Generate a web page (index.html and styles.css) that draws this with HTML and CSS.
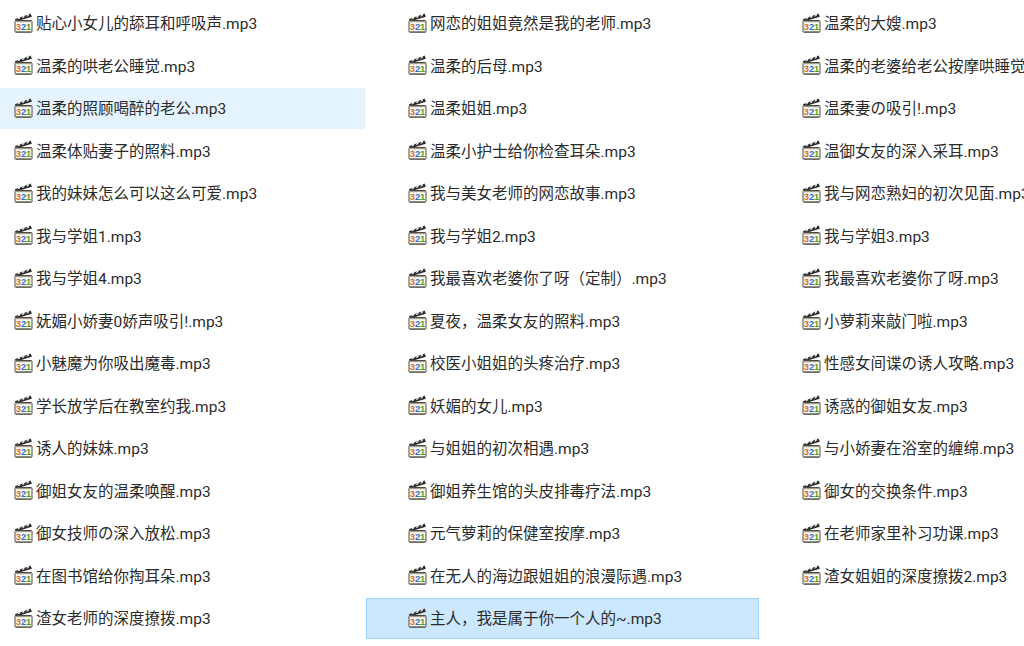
FILE: index.html
```html
<!DOCTYPE html>
<html lang="zh-CN">
<head>
<meta charset="utf-8">
<title>mp3 files</title>
<link rel="stylesheet" href="styles.css">
</head>
<body>
<svg class="defs" width="0" height="0" aria-hidden="true">
  <symbol id="mp3" viewBox="0 0 19 20">
    <path d="M.8 6.2 16.6.6l1.3 3.2L2.2 8.4z" fill="#2e2e2e"/>
    <path d="M3.6 6.4 4.8 3.9l2-.7L5.6 5.8zM8 5l1.2-2.7 2-.7L10 4.4zM12.4 3.7l1.2-2.8 2-.6-1.2 2.8z" fill="#f0f0f0"/>
    <rect x="1" y="7.5" width="17" height="11.8" rx="1" fill="#fbfaf5" stroke="#4d4a44" stroke-width="1"/>
    <path d="M1.5 8h16v1.2h-16z" fill="#a59d88"/>
    <path d="M1.5 18h16v1h-16z" fill="#8f8a7c"/>
  </symbol>
</svg>
<main class="list">
  <section class="col col-first">
    <div class="row"><svg class="ico" viewBox="0 0 19 20"><use href="#mp3"/><text class="num" x="9.5" y="17.2"><tspan class="d3">3</tspan><tspan class="d2">2</tspan><tspan class="d1">1</tspan></text></svg><span>贴心小女儿的舔耳和呼吸声.mp3</span></div>
    <div class="row"><svg class="ico" viewBox="0 0 19 20"><use href="#mp3"/><text class="num" x="9.5" y="17.2"><tspan class="d3">3</tspan><tspan class="d2">2</tspan><tspan class="d1">1</tspan></text></svg><span>温柔的哄老公睡觉.mp3</span></div>
    <div class="row hover"><svg class="ico" viewBox="0 0 19 20"><use href="#mp3"/><text class="num" x="9.5" y="17.2"><tspan class="d3">3</tspan><tspan class="d2">2</tspan><tspan class="d1">1</tspan></text></svg><span>温柔的照顾喝醉的老公.mp3</span></div>
    <div class="row"><svg class="ico" viewBox="0 0 19 20"><use href="#mp3"/><text class="num" x="9.5" y="17.2"><tspan class="d3">3</tspan><tspan class="d2">2</tspan><tspan class="d1">1</tspan></text></svg><span>温柔体贴妻子的照料.mp3</span></div>
    <div class="row"><svg class="ico" viewBox="0 0 19 20"><use href="#mp3"/><text class="num" x="9.5" y="17.2"><tspan class="d3">3</tspan><tspan class="d2">2</tspan><tspan class="d1">1</tspan></text></svg><span>我的妹妹怎么可以这么可爱.mp3</span></div>
    <div class="row"><svg class="ico" viewBox="0 0 19 20"><use href="#mp3"/><text class="num" x="9.5" y="17.2"><tspan class="d3">3</tspan><tspan class="d2">2</tspan><tspan class="d1">1</tspan></text></svg><span>我与学姐1.mp3</span></div>
    <div class="row"><svg class="ico" viewBox="0 0 19 20"><use href="#mp3"/><text class="num" x="9.5" y="17.2"><tspan class="d3">3</tspan><tspan class="d2">2</tspan><tspan class="d1">1</tspan></text></svg><span>我与学姐4.mp3</span></div>
    <div class="row"><svg class="ico" viewBox="0 0 19 20"><use href="#mp3"/><text class="num" x="9.5" y="17.2"><tspan class="d3">3</tspan><tspan class="d2">2</tspan><tspan class="d1">1</tspan></text></svg><span>妩媚小娇妻0娇声吸引!.mp3</span></div>
    <div class="row"><svg class="ico" viewBox="0 0 19 20"><use href="#mp3"/><text class="num" x="9.5" y="17.2"><tspan class="d3">3</tspan><tspan class="d2">2</tspan><tspan class="d1">1</tspan></text></svg><span>小魅魔为你吸出魔毒.mp3</span></div>
    <div class="row"><svg class="ico" viewBox="0 0 19 20"><use href="#mp3"/><text class="num" x="9.5" y="17.2"><tspan class="d3">3</tspan><tspan class="d2">2</tspan><tspan class="d1">1</tspan></text></svg><span>学长放学后在教室约我.mp3</span></div>
    <div class="row"><svg class="ico" viewBox="0 0 19 20"><use href="#mp3"/><text class="num" x="9.5" y="17.2"><tspan class="d3">3</tspan><tspan class="d2">2</tspan><tspan class="d1">1</tspan></text></svg><span>诱人的妹妹.mp3</span></div>
    <div class="row"><svg class="ico" viewBox="0 0 19 20"><use href="#mp3"/><text class="num" x="9.5" y="17.2"><tspan class="d3">3</tspan><tspan class="d2">2</tspan><tspan class="d1">1</tspan></text></svg><span>御姐女友的温柔唤醒.mp3</span></div>
    <div class="row"><svg class="ico" viewBox="0 0 19 20"><use href="#mp3"/><text class="num" x="9.5" y="17.2"><tspan class="d3">3</tspan><tspan class="d2">2</tspan><tspan class="d1">1</tspan></text></svg><span>御女技师の深入放松.mp3</span></div>
    <div class="row"><svg class="ico" viewBox="0 0 19 20"><use href="#mp3"/><text class="num" x="9.5" y="17.2"><tspan class="d3">3</tspan><tspan class="d2">2</tspan><tspan class="d1">1</tspan></text></svg><span>在图书馆给你掏耳朵.mp3</span></div>
    <div class="row"><svg class="ico" viewBox="0 0 19 20"><use href="#mp3"/><text class="num" x="9.5" y="17.2"><tspan class="d3">3</tspan><tspan class="d2">2</tspan><tspan class="d1">1</tspan></text></svg><span>渣女老师的深度撩拨.mp3</span></div>
  </section>
  <section class="col">
    <div class="row"><svg class="ico" viewBox="0 0 19 20"><use href="#mp3"/><text class="num" x="9.5" y="17.2"><tspan class="d3">3</tspan><tspan class="d2">2</tspan><tspan class="d1">1</tspan></text></svg><span>网恋的姐姐竟然是我的老师.mp3</span></div>
    <div class="row"><svg class="ico" viewBox="0 0 19 20"><use href="#mp3"/><text class="num" x="9.5" y="17.2"><tspan class="d3">3</tspan><tspan class="d2">2</tspan><tspan class="d1">1</tspan></text></svg><span>温柔的后母.mp3</span></div>
    <div class="row"><svg class="ico" viewBox="0 0 19 20"><use href="#mp3"/><text class="num" x="9.5" y="17.2"><tspan class="d3">3</tspan><tspan class="d2">2</tspan><tspan class="d1">1</tspan></text></svg><span>温柔姐姐.mp3</span></div>
    <div class="row"><svg class="ico" viewBox="0 0 19 20"><use href="#mp3"/><text class="num" x="9.5" y="17.2"><tspan class="d3">3</tspan><tspan class="d2">2</tspan><tspan class="d1">1</tspan></text></svg><span>温柔小护士给你检查耳朵.mp3</span></div>
    <div class="row"><svg class="ico" viewBox="0 0 19 20"><use href="#mp3"/><text class="num" x="9.5" y="17.2"><tspan class="d3">3</tspan><tspan class="d2">2</tspan><tspan class="d1">1</tspan></text></svg><span>我与美女老师的网恋故事.mp3</span></div>
    <div class="row"><svg class="ico" viewBox="0 0 19 20"><use href="#mp3"/><text class="num" x="9.5" y="17.2"><tspan class="d3">3</tspan><tspan class="d2">2</tspan><tspan class="d1">1</tspan></text></svg><span>我与学姐2.mp3</span></div>
    <div class="row"><svg class="ico" viewBox="0 0 19 20"><use href="#mp3"/><text class="num" x="9.5" y="17.2"><tspan class="d3">3</tspan><tspan class="d2">2</tspan><tspan class="d1">1</tspan></text></svg><span>我最喜欢老婆你了呀（定制）.mp3</span></div>
    <div class="row"><svg class="ico" viewBox="0 0 19 20"><use href="#mp3"/><text class="num" x="9.5" y="17.2"><tspan class="d3">3</tspan><tspan class="d2">2</tspan><tspan class="d1">1</tspan></text></svg><span>夏夜，温柔女友的照料.mp3</span></div>
    <div class="row"><svg class="ico" viewBox="0 0 19 20"><use href="#mp3"/><text class="num" x="9.5" y="17.2"><tspan class="d3">3</tspan><tspan class="d2">2</tspan><tspan class="d1">1</tspan></text></svg><span>校医小姐姐的头疼治疗.mp3</span></div>
    <div class="row"><svg class="ico" viewBox="0 0 19 20"><use href="#mp3"/><text class="num" x="9.5" y="17.2"><tspan class="d3">3</tspan><tspan class="d2">2</tspan><tspan class="d1">1</tspan></text></svg><span>妖媚的女儿.mp3</span></div>
    <div class="row"><svg class="ico" viewBox="0 0 19 20"><use href="#mp3"/><text class="num" x="9.5" y="17.2"><tspan class="d3">3</tspan><tspan class="d2">2</tspan><tspan class="d1">1</tspan></text></svg><span>与姐姐的初次相遇.mp3</span></div>
    <div class="row"><svg class="ico" viewBox="0 0 19 20"><use href="#mp3"/><text class="num" x="9.5" y="17.2"><tspan class="d3">3</tspan><tspan class="d2">2</tspan><tspan class="d1">1</tspan></text></svg><span>御姐养生馆的头皮排毒疗法.mp3</span></div>
    <div class="row"><svg class="ico" viewBox="0 0 19 20"><use href="#mp3"/><text class="num" x="9.5" y="17.2"><tspan class="d3">3</tspan><tspan class="d2">2</tspan><tspan class="d1">1</tspan></text></svg><span>元气萝莉的保健室按摩.mp3</span></div>
    <div class="row"><svg class="ico" viewBox="0 0 19 20"><use href="#mp3"/><text class="num" x="9.5" y="17.2"><tspan class="d3">3</tspan><tspan class="d2">2</tspan><tspan class="d1">1</tspan></text></svg><span>在无人的海边跟姐姐的浪漫际遇.mp3</span></div>
    <div class="row selected"><svg class="ico" viewBox="0 0 19 20"><use href="#mp3"/><text class="num" x="9.5" y="17.2"><tspan class="d3">3</tspan><tspan class="d2">2</tspan><tspan class="d1">1</tspan></text></svg><span>主人，我是属于你一个人的~.mp3</span></div>
  </section>
  <section class="col">
    <div class="row"><svg class="ico" viewBox="0 0 19 20"><use href="#mp3"/><text class="num" x="9.5" y="17.2"><tspan class="d3">3</tspan><tspan class="d2">2</tspan><tspan class="d1">1</tspan></text></svg><span>温柔的大嫂.mp3</span></div>
    <div class="row"><svg class="ico" viewBox="0 0 19 20"><use href="#mp3"/><text class="num" x="9.5" y="17.2"><tspan class="d3">3</tspan><tspan class="d2">2</tspan><tspan class="d1">1</tspan></text></svg><span>温柔的老婆给老公按摩哄睡觉</span></div>
    <div class="row"><svg class="ico" viewBox="0 0 19 20"><use href="#mp3"/><text class="num" x="9.5" y="17.2"><tspan class="d3">3</tspan><tspan class="d2">2</tspan><tspan class="d1">1</tspan></text></svg><span>温柔妻の吸引!.mp3</span></div>
    <div class="row"><svg class="ico" viewBox="0 0 19 20"><use href="#mp3"/><text class="num" x="9.5" y="17.2"><tspan class="d3">3</tspan><tspan class="d2">2</tspan><tspan class="d1">1</tspan></text></svg><span>温御女友的深入采耳.mp3</span></div>
    <div class="row"><svg class="ico" viewBox="0 0 19 20"><use href="#mp3"/><text class="num" x="9.5" y="17.2"><tspan class="d3">3</tspan><tspan class="d2">2</tspan><tspan class="d1">1</tspan></text></svg><span>我与网恋熟妇的初次见面.mp3</span></div>
    <div class="row"><svg class="ico" viewBox="0 0 19 20"><use href="#mp3"/><text class="num" x="9.5" y="17.2"><tspan class="d3">3</tspan><tspan class="d2">2</tspan><tspan class="d1">1</tspan></text></svg><span>我与学姐3.mp3</span></div>
    <div class="row"><svg class="ico" viewBox="0 0 19 20"><use href="#mp3"/><text class="num" x="9.5" y="17.2"><tspan class="d3">3</tspan><tspan class="d2">2</tspan><tspan class="d1">1</tspan></text></svg><span>我最喜欢老婆你了呀.mp3</span></div>
    <div class="row"><svg class="ico" viewBox="0 0 19 20"><use href="#mp3"/><text class="num" x="9.5" y="17.2"><tspan class="d3">3</tspan><tspan class="d2">2</tspan><tspan class="d1">1</tspan></text></svg><span>小萝莉来敲门啦.mp3</span></div>
    <div class="row"><svg class="ico" viewBox="0 0 19 20"><use href="#mp3"/><text class="num" x="9.5" y="17.2"><tspan class="d3">3</tspan><tspan class="d2">2</tspan><tspan class="d1">1</tspan></text></svg><span>性感女间谍の诱人攻略.mp3</span></div>
    <div class="row"><svg class="ico" viewBox="0 0 19 20"><use href="#mp3"/><text class="num" x="9.5" y="17.2"><tspan class="d3">3</tspan><tspan class="d2">2</tspan><tspan class="d1">1</tspan></text></svg><span>诱惑的御姐女友.mp3</span></div>
    <div class="row"><svg class="ico" viewBox="0 0 19 20"><use href="#mp3"/><text class="num" x="9.5" y="17.2"><tspan class="d3">3</tspan><tspan class="d2">2</tspan><tspan class="d1">1</tspan></text></svg><span>与小娇妻在浴室的缠绵.mp3</span></div>
    <div class="row"><svg class="ico" viewBox="0 0 19 20"><use href="#mp3"/><text class="num" x="9.5" y="17.2"><tspan class="d3">3</tspan><tspan class="d2">2</tspan><tspan class="d1">1</tspan></text></svg><span>御女的交换条件.mp3</span></div>
    <div class="row"><svg class="ico" viewBox="0 0 19 20"><use href="#mp3"/><text class="num" x="9.5" y="17.2"><tspan class="d3">3</tspan><tspan class="d2">2</tspan><tspan class="d1">1</tspan></text></svg><span>在老师家里补习功课.mp3</span></div>
    <div class="row"><svg class="ico" viewBox="0 0 19 20"><use href="#mp3"/><text class="num" x="9.5" y="17.2"><tspan class="d3">3</tspan><tspan class="d2">2</tspan><tspan class="d1">1</tspan></text></svg><span>渣女姐姐的深度撩拨2.mp3</span></div>
  </section>
</main>
</body>
</html>
```
FILE: styles.css
```css
html, body {
  margin: 0;
  padding: 0;
  width: 1024px;
  height: 646px;
  overflow: hidden;
  background: #fff;
}
.defs { display: block; height: 0; }
.list {
  display: grid;
  grid-template-columns: 366px 394px 264px;
  padding-top: 3px;
  font: 15.5px/20px Roboto, "Noto Sans CJK SC", sans-serif;
  color: #2b2b2b;
}
.col { display: flex; flex-direction: column; gap: 2px; min-width: 0; overflow: hidden; }
.row {
  box-sizing: border-box;
  height: 40.5px;
  margin-right: 1px;
  padding-left: 42px;
  display: flex;
  align-items: center;
  gap: 3px;
  white-space: nowrap;
}
.row span { padding-top: 2px; }
.col-first .row { padding-left: 14px; }
.hover { background: #e5f3ff; }
.selected { background: #cce8ff; box-shadow: inset 0 0 0 1px #99d1ff; border-radius: 1px; }
.ico { width: 19px; height: 20px; flex: none; margin-bottom: 1px; }
.num { font: bold 9.4px "Liberation Sans", sans-serif; text-anchor: middle; }
.d3 { fill: #dc6a1e; }
.d2 { fill: #1f74cc; }
.d1 { fill: #4f9f24; }
```
